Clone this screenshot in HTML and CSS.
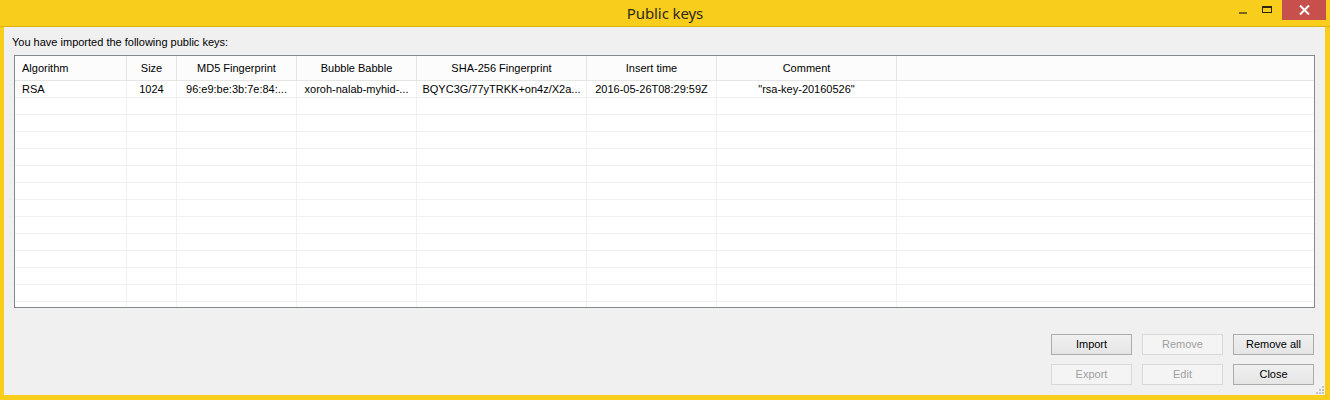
FILE: index.html
```html
<!DOCTYPE html>
<html>
<head>
<meta charset="utf-8">
<link rel="stylesheet" href="styles.css">
</head>
<body>
<div class="window">
  <div class="titlebar">
    <div class="title">Public keys</div>
    <div class="controls">
      <div class="ctl min"><span class="min-bar"></span></div>
      <div class="ctl max"><span class="max-box"></span></div>
      <div class="ctl close">
        <svg width="11" height="10" viewBox="0 0 11 10"><path d="M1 0.5 L10 9.5 M10 0.5 L1 9.5" stroke="#fff" stroke-width="2"/></svg>
      </div>
    </div>
  </div>
  <div class="client">
    <div class="label">You have imported the following public keys:</div>
    <div class="table">
      <div class="thead row">
        <div class="c c1 left">Algorithm</div>
        <div class="c c2">Size</div>
        <div class="c c3">MD5 Fingerprint</div>
        <div class="c c4">Bubble Babble</div>
        <div class="c c5">SHA-256 Fingerprint</div>
        <div class="c c6">Insert time</div>
        <div class="c c7">Comment</div>
        <div class="c fill"></div>
      </div>
      <div class="row body">
        <div class="c c1 left">RSA</div>
        <div class="c c2">1024</div>
        <div class="c c3">96:e9:be:3b:7e:84:...</div>
        <div class="c c4">xoroh-nalab-myhid-...</div>
        <div class="c c5">BQYC3G/77yTRKK+on4z/X2a...</div>
        <div class="c c6">2016-05-26T08:29:59Z</div>
        <div class="c c7">"rsa-key-20160526"</div>
        <div class="c fill"></div>
      </div>
      <div class="row body"><div class="c c1"></div><div class="c c2"></div><div class="c c3"></div><div class="c c4"></div><div class="c c5"></div><div class="c c6"></div><div class="c c7"></div><div class="c fill"></div></div>
      <div class="row body"><div class="c c1"></div><div class="c c2"></div><div class="c c3"></div><div class="c c4"></div><div class="c c5"></div><div class="c c6"></div><div class="c c7"></div><div class="c fill"></div></div>
      <div class="row body"><div class="c c1"></div><div class="c c2"></div><div class="c c3"></div><div class="c c4"></div><div class="c c5"></div><div class="c c6"></div><div class="c c7"></div><div class="c fill"></div></div>
      <div class="row body"><div class="c c1"></div><div class="c c2"></div><div class="c c3"></div><div class="c c4"></div><div class="c c5"></div><div class="c c6"></div><div class="c c7"></div><div class="c fill"></div></div>
      <div class="row body"><div class="c c1"></div><div class="c c2"></div><div class="c c3"></div><div class="c c4"></div><div class="c c5"></div><div class="c c6"></div><div class="c c7"></div><div class="c fill"></div></div>
      <div class="row body"><div class="c c1"></div><div class="c c2"></div><div class="c c3"></div><div class="c c4"></div><div class="c c5"></div><div class="c c6"></div><div class="c c7"></div><div class="c fill"></div></div>
      <div class="row body"><div class="c c1"></div><div class="c c2"></div><div class="c c3"></div><div class="c c4"></div><div class="c c5"></div><div class="c c6"></div><div class="c c7"></div><div class="c fill"></div></div>
      <div class="row body"><div class="c c1"></div><div class="c c2"></div><div class="c c3"></div><div class="c c4"></div><div class="c c5"></div><div class="c c6"></div><div class="c c7"></div><div class="c fill"></div></div>
      <div class="row body"><div class="c c1"></div><div class="c c2"></div><div class="c c3"></div><div class="c c4"></div><div class="c c5"></div><div class="c c6"></div><div class="c c7"></div><div class="c fill"></div></div>
      <div class="row body"><div class="c c1"></div><div class="c c2"></div><div class="c c3"></div><div class="c c4"></div><div class="c c5"></div><div class="c c6"></div><div class="c c7"></div><div class="c fill"></div></div>
      <div class="row body"><div class="c c1"></div><div class="c c2"></div><div class="c c3"></div><div class="c c4"></div><div class="c c5"></div><div class="c c6"></div><div class="c c7"></div><div class="c fill"></div></div>
      <div class="row body"><div class="c c1"></div><div class="c c2"></div><div class="c c3"></div><div class="c c4"></div><div class="c c5"></div><div class="c c6"></div><div class="c c7"></div><div class="c fill"></div></div>
      <div class="row body"><div class="c c1"></div><div class="c c2"></div><div class="c c3"></div><div class="c c4"></div><div class="c c5"></div><div class="c c6"></div><div class="c c7"></div><div class="c fill"></div></div>
    </div>
    <div class="buttons">
      <div class="btn">Import</div>
      <div class="btn disabled">Remove</div>
      <div class="btn">Remove all</div>
      <div class="btn disabled">Export</div>
      <div class="btn disabled">Edit</div>
      <div class="btn">Close</div>
    </div>
    <div class="grip">
      <svg width="8" height="8" viewBox="0 0 8 8" fill="#c4c4c4">
        <rect x="6" y="0" width="2" height="2"/>
        <rect x="3" y="3" width="2" height="2"/><rect x="6" y="3" width="2" height="2"/>
        <rect x="0" y="6" width="2" height="2"/><rect x="3" y="6" width="2" height="2"/><rect x="6" y="6" width="2" height="2"/>
      </svg>
    </div>
  </div>
</div>
</body>
</html>
```

FILE: styles.css
```css
html, body {
  margin: 0;
  padding: 0;
}
body {
  width: 1330px;
  height: 400px;
  overflow: hidden;
  font-family: "Liberation Sans", Arial, sans-serif;
  font-size: 11px;
  color: #000;
}
.window {
  width: 1330px;
  height: 400px;
  background: #f9cd1c;
  display: flex;
  flex-direction: column;
  box-sizing: border-box;
}
.titlebar {
  height: 27px;
  flex: none;
  display: flex;
  position: relative;
  box-sizing: border-box;
  border-bottom: 1px solid #dcb114;
}
.title {
  flex: 1;
  text-align: center;
  font-family: "Noto Sans", "Open Sans", sans-serif;
  font-size: 15px;
  line-height: 26px;
  color: #2e2a1e;
  letter-spacing: -0.1px;
}
.controls {
  position: absolute;
  right: 4px;
  top: 0;
  display: flex;
  align-items: flex-start;
}
.ctl {
  height: 20px;
  display: flex;
  align-items: center;
  justify-content: center;
}
.min { width: 24px; }
.max { width: 24px; margin-right: 3px; }
.min-bar {
  display: block;
  width: 8px;
  height: 2px;
  background: #7a6520;
  margin-top: 6px;
}
.max-box {
  display: block;
  width: 8px;
  height: 4px;
  border: 1px solid #2b2510;
  border-top-width: 2px;
  margin-top: -1px;
}
.close {
  width: 44px;
  background: #c7504c;
}
.client {
  flex: 1;
  margin: 0 5px 5px 4px;
  background: #f0f0f0;
  display: flex;
  flex-direction: column;
  position: relative;
}
.label {
  padding: 9px 0 0 8px;
  height: 19px;
  line-height: 13px;
  box-sizing: border-box;
}
.table {
  margin: 9px 10px 0 10px;
  height: 253px;
  border: 1px solid #828790;
  background: #fff;
  box-sizing: border-box;
  overflow: hidden;
}
.row {
  display: flex;
  height: 17px;
  box-sizing: border-box;
  border-bottom: 1px solid #f0f0f0;
}
.thead {
  height: 25px;
  background: #fcfcfc;
  border-bottom: 1px solid #e5e5e5;
}
.c {
  flex: none;
  box-sizing: border-box;
  border-right: 1px solid #f0f0f0;
  text-align: center;
  white-space: nowrap;
  overflow: hidden;
  line-height: 16px;
}
.thead .c {
  border-right-color: #e5e5e5;
  line-height: 24px;
}
.c.left { text-align: left; padding-left: 7px; }
.c1 { width: 112px; }
.c2 { width: 50px; }
.c3 { width: 120px; }
.c4 { width: 120px; }
.c5 { width: 170px; }
.c6 { width: 130px; }
.c7 { width: 180px; }
.c.fill { flex: 1; border-right: none; }
.buttons {
  display: grid;
  grid-template-columns: 81px 81px 81px;
  grid-auto-rows: 21px;
  column-gap: 10px;
  row-gap: 9px;
  align-self: flex-end;
  margin: 26px 11px 0 0;
}
.btn {
  box-sizing: border-box;
  border: 1px solid #acacac;
  background: linear-gradient(#f0f0f0, #e5e5e5);
  text-align: center;
  line-height: 19px;
  color: #000;
}
.btn.disabled {
  border-color: #d9d9d9;
  background: #f4f4f4;
  color: #a0a0a0;
}
.grip {
  position: absolute;
  right: 1px;
  bottom: 1px;
  width: 8px;
  height: 8px;
  line-height: 0;
}
```
